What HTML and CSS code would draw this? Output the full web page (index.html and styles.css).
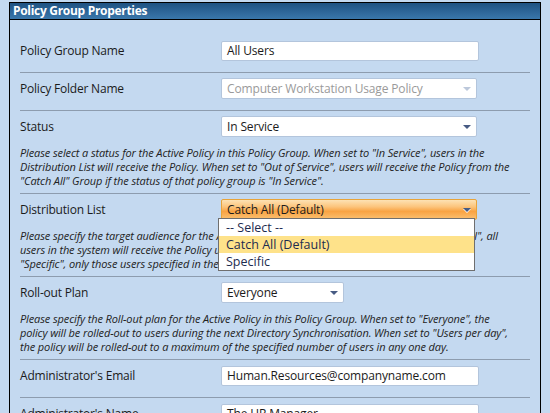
FILE: index.html
```html
<!DOCTYPE html>
<html lang="en">
<head>
    <meta charset="UTF-8">
    <title>Policy Group Properties</title>
    <link rel="stylesheet" href="styles.css">
</head>
<body>
    <div class="panel">
      <div class="panel-title">Policy Group Properties</div>
      <div class="panel-body">

        <div class="row">
          <div class="field">
            <label class="label">Policy Group Name</label>
            <div class="textbox">All Users</div>
          </div>
        </div>

        <div class="row">
          <div class="field">
            <label class="label">Policy Folder Name</label>
            <div class="select disabled">Computer Workstation Usage Policy<span class="arrow"></span></div>
          </div>
        </div>

        <div class="row has-desc">
          <div class="field">
            <label class="label">Status</label>
            <div class="select">In Service<span class="arrow"></span></div>
          </div>
          <p class="desc">Please select a status for the Active Policy in this Policy Group. When set to "In Service", users in the<br>Distribution List will receive the Policy. When set to "Out of Service", users will receive the Policy from the<br>"Catch All" Group if the status of that policy group is "In Service".</p>
        </div>

        <div class="row has-desc">
          <div class="field">
            <label class="label">Distribution List</label>
            <div class="select hot">Catch All (Default)<span class="arrow"></span>
              <ul class="droplist">
                <li>-- Select --</li>
                <li class="selected">Catch All (Default)</li>
                <li>Specific</li>
              </ul>
            </div>
          </div>
          <p class="desc">Please specify the target audience for the Active Policy in this Policy Group. When set to "Catch All", all<br>users in the system will receive the Policy unless they belong to another group. When set to<br>"Specific", only those users specified in the Distribution List will receive the Policy.</p>
        </div>

        <div class="row has-desc">
          <div class="field">
            <label class="label">Roll-out Plan</label>
            <div class="select short">Everyone<span class="arrow"></span></div>
          </div>
          <p class="desc">Please specify the Roll-out plan for the Active Policy in this Policy Group. When set to "Everyone", the<br>policy will be rolled-out to users during the next Directory Synchronisation. When set to "Users per day",<br>the policy will be rolled-out to a maximum of the specified number of users in any one day.</p>
        </div>

        <div class="row">
          <div class="field">
            <label class="label">Administrator's Email</label>
            <div class="textbox">Human.Resources@companyname.com</div>
          </div>
        </div>

        <div class="row">
          <div class="field">
            <label class="label">Administrator's Name</label>
            <div class="textbox">The HR Manager</div>
          </div>
        </div>

      </div>
    </div>
</body>
</html>
```

FILE: styles.css
```css
body{
  margin: 0;
  background: #c4d9f0;
  font-family: "Open Sans", "Noto Sans", sans-serif;
  color: #1b1b1b;
  overflow: hidden;
}

.panel{
  margin: 2px 9px 0 9px;
  border: 1px solid #000;
  border-bottom: none;
  height: 420px;
  background: #c4d9f0;
}

.panel-title{
  height: 16px;
  line-height: 16px;
  padding-left: 3px;
  color: #fff;
  font-weight: bold;
  font-size: 12px;
  letter-spacing: -0.3px;
  background: linear-gradient(#1f5282, #3a77ab);
  border-bottom: 1px solid #000;
}

.panel-body{
  padding: 15px 10px 0 10px;
}

.row{
  padding: 5px 0 11px;
  border-bottom: 1px solid #8d9cae;
}

.row.has-desc{
  padding-bottom: 5px;
}

.field{
  display: flex;
  align-items: center;
  height: 21px;
}

.label{
  width: 201px;
  font-size: 12px;
  letter-spacing: -0.2px;
}

.textbox,
.select{
  position: relative;
  box-sizing: border-box;
  height: 20px;
  line-height: 18px;
  width: 258px;
  padding-left: 5px;
  font-size: 12px;
  letter-spacing: -0.15px;
  background: #fff;
  border: 1px solid #b3c5dc;
  border-radius: 2px;
}

.select{
  height: 21px;
  line-height: 19px;
  width: 256px;
}

.select.short{
  width: 123px;
}

.select.disabled{
  color: #9a9a9a;
}

.arrow{
  position: absolute;
  right: 5px;
  top: 8px;
  width: 0;
  height: 0;
  border-left: 4px solid transparent;
  border-right: 4px solid transparent;
  border-top: 4px solid #475b83;
}

.disabled .arrow{
  border-top-color: #bcc8db;
}

.select.hot{
  border-color: #e8a43a;
  background: linear-gradient(#fde2b4 0%, #fcc57d 35%, #f9a343 60%, #fbc070 100%);
}

.hot .arrow{
  filter: drop-shadow(0 1px 0 #fff);
}

.droplist{
  position: absolute;
  top: 18px;
  left: -4px;
  width: 255px;
  margin: 0;
  padding: 0;
  list-style: none;
  background: #fff;
  border: 1px solid #6f6f6f;
  letter-spacing: 0;
  z-index: 2;
}

.droplist li{
  height: 17px;
  line-height: 17px;
  padding-left: 7px;
  font-size: 12.5px;
  color: #1d2b4f;
}

.droplist li.selected{
  background: #fee28a;
}

.desc{
  margin: 9px 0 0;
  font-size: 11px;
  line-height: 14px;
  letter-spacing: -0.12px;
  font-style: italic;
  white-space: nowrap;
  color: #222;
}
```
